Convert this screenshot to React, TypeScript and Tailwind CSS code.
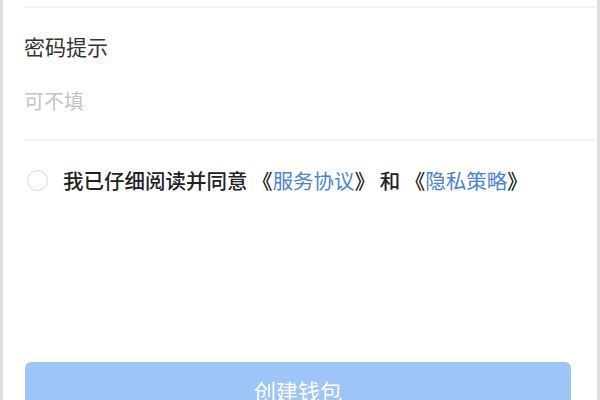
import React from 'react';

const font = { fontFamily: '"Noto Sans CJK SC", "Noto Sans", sans-serif' };

const App = () => {
  return (
    <div
      style={font}
      className="w-[600px] h-[400px] overflow-hidden bg-white border-l-[3px] border-r-[3px] border-[#dedede] flex flex-col"
    >
      <div className="pl-[21px]">
        <div className="mt-[6px] h-[2px] bg-[#f3f3f3]" />
        <div className="mt-[24px] text-[21px] leading-[28px] text-[#333]">密码提示</div>
        <div className="mt-[27px] text-[20px] leading-[28px] text-[#c4c4c4]">可不填</div>
        <div className="mt-[24px] h-[2px] bg-[#f3f3f3] mr-[2px]" />
      </div>

      <div className="mt-[25px] pl-[21px] flex items-center h-[28px]">
        <div className="ml-[3px] w-[21px] h-[21px] rounded-full border-[1.5px] border-[#d6d6d6]" />
        <div className="ml-[15px] text-[20.5px] leading-[28px] text-[#222] font-medium whitespace-nowrap">
          我已仔细阅读并同意 《<span className="text-[#4c82d8] font-normal">服务协议</span>》 和 《
          <span className="text-[#4c82d8] font-normal">隐私策略</span>》
        </div>
      </div>

      <div className="mt-auto pl-[22px] pr-[26px] shrink-0 h-[38px]">
        <button className="block w-full h-[56px] rounded-[6px] bg-[#9ec5f8] text-white text-[22px] leading-[56px]">
          创建钱包
        </button>
      </div>
    </div>
  );
};

export default App;
